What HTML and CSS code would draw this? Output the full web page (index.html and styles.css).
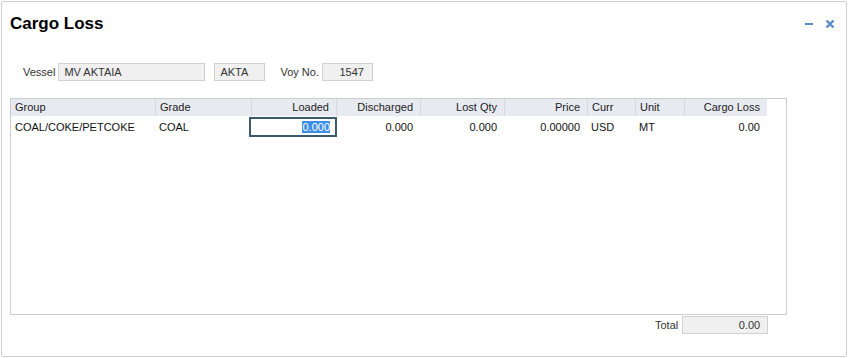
FILE: index.html
```html
<!DOCTYPE html>
<html>
<head>
<meta charset="utf-8">
<link rel="stylesheet" href="styles.css">
</head>
<body>
<div class="window">
  <div class="titlebar">
    <h1 class="title">Cargo Loss</h1>
    <div class="tools">
      <svg class="tool" width="10" height="10" viewBox="0 0 10 10"><rect x="1" y="4" width="8" height="2" fill="#5b8ac4"/></svg>
      <svg class="tool" width="10" height="10" viewBox="0 0 10 10"><path d="M1.5 1.5 L8.5 8.5 M8.5 1.5 L1.5 8.5" stroke="#5b8ac4" stroke-width="2.4"/></svg>
    </div>
  </div>
  <div class="form-row">
    <label class="lbl">Vessel</label>
    <div class="field f-vessel">MV AKTAIA</div>
    <div class="field f-code">AKTA</div>
    <label class="lbl lbl-voy">Voy No.</label>
    <div class="field f-voy">1547</div>
  </div>
  <div class="grid">
    <div class="row head">
      <div class="c">Group</div>
      <div class="c">Grade</div>
      <div class="c r">Loaded</div>
      <div class="c r">Discharged</div>
      <div class="c r">Lost Qty</div>
      <div class="c r">Price</div>
      <div class="c">Curr</div>
      <div class="c">Unit</div>
      <div class="c r">Cargo Loss</div>
    </div>
    <div class="row data">
      <div class="c">COAL/COKE/PETCOKE</div>
      <div class="c">COAL</div>
      <div class="c r edit"><span class="sel">0.000</span></div>
      <div class="c r">0.000</div>
      <div class="c r">0.000</div>
      <div class="c r">0.00000</div>
      <div class="c">USD</div>
      <div class="c">MT</div>
      <div class="c r">0.00</div>
    </div>
  </div>
  <div class="total-row">
    <label class="lbl">Total</label>
    <div class="field f-total">0.00</div>
  </div>
</div>
</body>
</html>
```

FILE: styles.css
```css
html, body {
  margin: 0;
  padding: 0;
  background: #ffffff;
}
body {
  font-family: "Liberation Sans", Arial, sans-serif;
  font-size: 11px;
  color: #222;
}
.window {
  box-sizing: border-box;
  margin: 1px;
  width: 846px;
  height: 356px;
  border: 1px solid #cfcfcf;
  border-radius: 2px;
  display: flex;
  flex-direction: column;
}
.titlebar {
  display: flex;
  justify-content: space-between;
  align-items: flex-start;
  padding: 12px 11px 0 8px;
  height: 20px;
}
.title {
  margin: 0;
  font-size: 17px;
  line-height: 20px;
  font-weight: bold;
  color: #000;
}
.tools {
  display: flex;
  gap: 11px;
  padding-top: 5px;
}
.tool {
  display: block;
}
.form-row {
  display: flex;
  align-items: center;
  margin-top: 29px;
  padding-left: 21px;
  height: 18px;
}
.lbl {
  color: #333;
  margin-right: 3px;
}
.field {
  box-sizing: border-box;
  height: 18px;
  line-height: 16px;
  border: 1px solid #d0d0d0;
  background: #f0f0f0;
  padding: 0 5px;
  color: #333;
}
.f-vessel { width: 147px; }
.f-code { width: 51px; margin-left: 9px; }
.lbl-voy { margin-left: 15px; margin-right: 3px; }
.f-voy { width: 51px; text-align: right; padding-right: 8px; }
.grid {
  box-sizing: border-box;
  margin: 17px 0 0 8px;
  width: 777px;
  height: 217px;
  border: 1px solid #cccccc;
}
.row {
  display: grid;
  grid-template-columns: 144px 96px 85px 84px 84px 83px 48px 49px 83px;
}
.head {
  height: 17px;
  width: 756px;
  background: #e8eaf1;
}
.head .c {
  line-height: 17px;
  border-left: 1px solid #d6d8de;
}
.head .c:first-child { border-left: none; }
.c {
  padding: 0 7px 0 4px;
  white-space: nowrap;
  overflow: hidden;
}
.r { text-align: right; }
.data {
  margin-top: 1px;
  height: 20px;
  width: 756px;
}
.data .c {
  line-height: 20px;
  color: #111;
}
.data .edit {
  box-sizing: border-box;
  margin-left: -2px;
  margin-right: -1px;
  border: 2px solid #3c5a6e;
  line-height: 16px;
  padding-right: 5px;
  height: 20px;
}
.sel {
  background: #3d8fe8;
  color: #fff;
}
.total-row {
  display: flex;
  align-items: center;
  margin: 1px 0 0 653px;
  height: 18px;
}
.total-row .lbl {
  margin-right: 4px;
}
.f-total {
  width: 86px;
  text-align: right;
  padding-right: 7px;
}
```
